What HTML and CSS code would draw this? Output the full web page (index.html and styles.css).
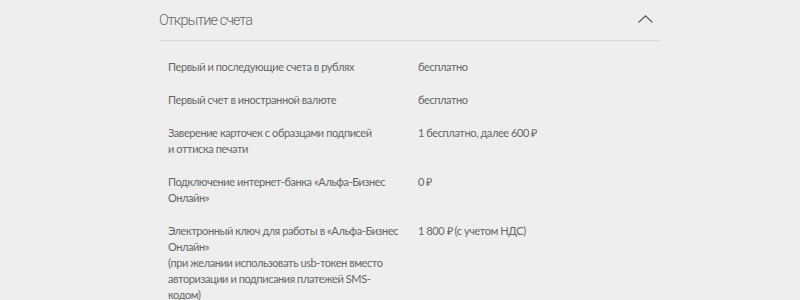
FILE: index.html
```html
<!DOCTYPE html>
<html lang="ru">
<head>
<meta charset="utf-8">
<link rel="stylesheet" href="styles.css">
</head>
<body>
<section class="tariff">
  <header class="tariff-head">
    <h2 class="tariff-title">Открытие счета</h2>
    <svg class="chevron" width="15" height="8" viewBox="0 0 15 8"><path d="M0.5 7.5 L7.5 0.8 L14.5 7.5" fill="none" stroke="#555" stroke-width="1.1"/></svg>
  </header>
  <div class="tariff-list">
    <div class="row"><div class="label">Первый и последующие счета в рублях</div><div class="value">бесплатно</div></div>
    <div class="row"><div class="label">Первый счет в иностранной валюте</div><div class="value">бесплатно</div></div>
    <div class="row"><div class="label">Заверение карточек с образцами подписей<br>и оттиска печати</div><div class="value">1 бесплатно, далее 600 ₽</div></div>
    <div class="row"><div class="label">Подключение интернет-банка «Альфа-Бизнес Онлайн»</div><div class="value">0 ₽</div></div>
    <div class="row"><div class="label">Электронный ключ для работы в «Альфа-Бизнес Онлайн»<br>(при желании использовать usb-токен вместо авторизации и подписания платежей SMS-кодом)</div><div class="value">1 800 ₽ (с учетом НДС)</div></div>
  </div>
</section>
</body>
</html>
```
FILE: styles.css
```css
html, body {
  margin: 0;
  background: #eeeeee;
}
body {
  font-family: "Lato", "Open Sans", sans-serif;
  color: #666666;
}
.tariff {
  width: 502px;
  margin-left: 158px;
}
.tariff-head {
  display: flex;
  align-items: center;
  justify-content: space-between;
  height: 40px;
  border-bottom: 1px solid #dadada;
  padding-left: 1px;
}
.tariff-title {
  margin: 0;
  font-family: "Roboto", "Lato", sans-serif;
  font-size: 14.5px;
  font-weight: 300;
  letter-spacing: -0.95px;
  color: #666666;
}
.chevron {
  margin-right: 7px;
  margin-top: -2px;
}
.tariff-list {
  padding: 18px 0 0 10px;
  display: flex;
  flex-direction: column;
  gap: 17px;
}
.row {
  display: flex;
  font-size: 11px;
  line-height: 16px;
  letter-spacing: -0.42px;
}
.label {
  width: 232px;
  margin-right: 18px;
}
.value {
  flex: 1;
}
```
